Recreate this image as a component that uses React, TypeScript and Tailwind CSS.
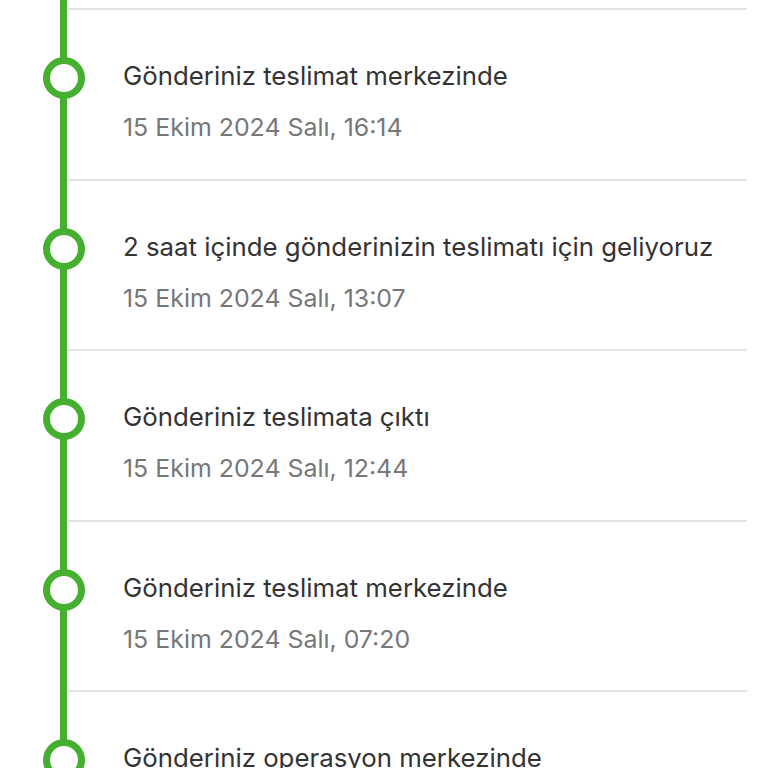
const events = [
  { title: 'Gönderiniz teslimat merkezinde', date: '15 Ekim 2024 Salı, 16:14' },
  { title: '2 saat içinde gönderinizin teslimatı için geliyoruz', date: '15 Ekim 2024 Salı, 13:07' },
  { title: 'Gönderiniz teslimata çıktı', date: '15 Ekim 2024 Salı, 12:44' },
  { title: 'Gönderiniz teslimat merkezinde', date: '15 Ekim 2024 Salı, 07:20' },
  { title: 'Gönderiniz operasyon merkezinde', date: '15 Ekim 2024 Salı, 03:51' },
];

export default function App() {
  return (
    <div className="h-[768px] w-[768px] overflow-hidden bg-white font-['Inter',sans-serif]">
      <div className="flex h-[8px]">
        <div className="ml-[60px] w-[7px] bg-[#45b02f]" />
      </div>
      {events.map((e, i) => (
        <div key={i} className="relative flex h-[170.5px]">
          <div className="w-[68px] shrink-0">
            <div className="ml-[60px] h-full w-[7px] bg-[#45b02f]" />
          </div>
          <div className="absolute left-[43px] top-[49px] h-[42px] w-[42px] rounded-full border-[7px] border-[#45b02f] bg-white" />
          <div className="mr-[21px] flex-1 border-t-2 border-[#e4e4e4] pl-[55px]">
            <div className="mt-[50px] text-[25.8px] leading-[32px] text-[#333]">{e.title}</div>
            <div className="mt-[19px] text-[24.9px] leading-[32px] text-[#777]">{e.date}</div>
          </div>
        </div>
      ))}
    </div>
  );
}
